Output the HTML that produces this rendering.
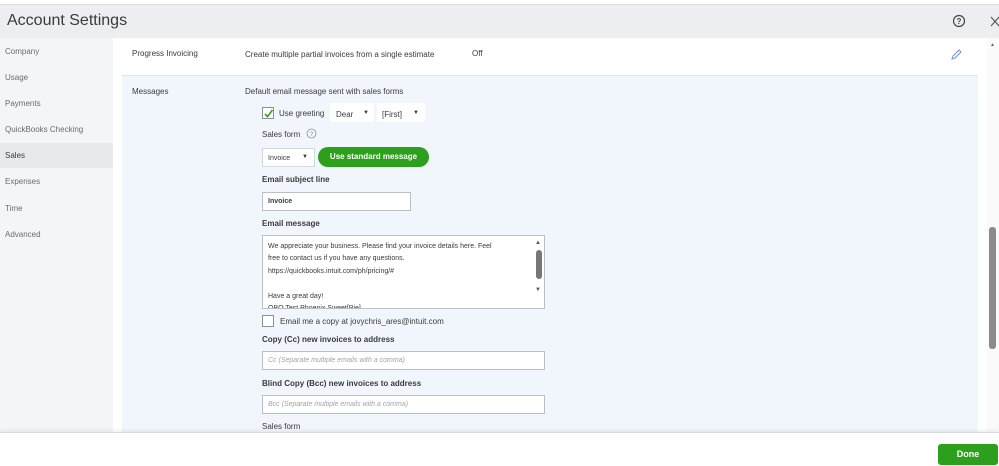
<!DOCTYPE html>
<html><head><style>
*{margin:0;padding:0;box-sizing:border-box}
body{width:999px;height:466px;overflow:hidden;background:#fff;font-family:"Liberation Sans",sans-serif;color:#393a3d;position:relative;font-size:8px}
.a{position:absolute}
.top{left:0;top:4px;width:999px;height:34px;background:#eceef1;border-top:1px solid #dcdde0}
.side{left:0;top:38px;width:113px;height:394px;background:#f4f5f8}
.si{position:absolute;left:5px;font-size:8px;color:#6b6c72}
.blue{left:122px;top:75px;width:856px;height:357px;background:#f1f6fd;border-top:1px solid #dde5ef}
.lbl{font-size:8px;color:#393a3d}
.b{font-weight:bold}
.inp{position:absolute;background:#fff;border:1px solid #babec5}
.ph{font-style:italic;color:#a0a3a9;font-size:7px}
</style></head><body>
<div class="a top"></div>
<div class="a" style="left:7px;top:12px;font-size:16px;color:#393a3d">Account Settings</div>
<svg class="a" style="left:952px;top:14px" width="14" height="14"><circle cx="7" cy="7" r="5.5" fill="none" stroke="#444" stroke-width="1.2"/><text x="7" y="10" font-size="8" text-anchor="middle" font-family="Liberation Sans" fill="#444" font-weight="bold">?</text></svg>
<svg class="a" style="left:990px;top:16px" width="9" height="11"><path d="M1 1L9 10M9 1L1 10" stroke="#555" stroke-width="1.1"/></svg>
<div class="a side"></div>
<div class="a" style="left:0;top:143px;width:113px;height:25px;background:#e8e9ec"></div>
<div class="si" style="top:47px">Company</div>
<div class="si" style="top:73px">Usage</div>
<div class="si" style="top:99px">Payments</div>
<div class="si" style="top:125px">QuickBooks Checking</div>
<div class="si" style="top:151px;color:#393a3d">Sales</div>
<div class="si" style="top:177px">Expenses</div>
<div class="si" style="top:204px">Time</div>
<div class="si" style="top:230px">Advanced</div>
<div class="a lbl" style="left:132px;top:49px">Progress Invoicing</div>
<div class="a lbl" style="left:245px;top:50px">Create multiple partial invoices from a single estimate</div>
<div class="a lbl" style="left:472px;top:49px">Off</div>
<svg class="a" style="left:950px;top:49px" width="12" height="12"><path d="M2 10L3 7L9 1L11 3L5 9Z" fill="none" stroke="#6b8fe0" stroke-width="1"/></svg>
<div class="a blue"></div>
<div class="a lbl" style="left:132px;top:87px">Messages</div>
<div class="a lbl" style="left:245px;top:87px">Default email message sent with sales forms</div>
<div class="a" style="left:262px;top:107px;width:12px;height:12px;border:1px solid #8d9096;background:#fff"></div>
<svg class="a" style="left:263px;top:108px" width="11" height="11"><path d="M2 6L4.5 8.5L9.5 2" fill="none" stroke="#2ca01c" stroke-width="1.6"/></svg>
<div class="a lbl" style="left:279px;top:109px">Use greeting</div>
<div class="a" style="left:330px;top:103px;width:44px;height:19px;background:#fff"></div>
<div class="a lbl" style="left:336px;top:110px">Dear</div><div class="a" style="left:363px;top:110px;font-size:6px">▼</div>
<div class="a" style="left:377px;top:103px;width:48px;height:19px;background:#fff"></div>
<div class="a lbl" style="left:382px;top:110px">[First]</div><div class="a" style="left:413px;top:110px;font-size:6px">▼</div>
<div class="a lbl" style="left:262px;top:130px">Sales form</div>
<svg class="a" style="left:306px;top:128px" width="11" height="11"><circle cx="5.5" cy="5.5" r="4.5" fill="none" stroke="#8d9096" stroke-width=".8"/><text x="5.5" y="8" font-size="6" text-anchor="middle" fill="#8d9096">?</text></svg>
<div class="a" style="left:262px;top:148px;width:53px;height:19px;background:#fff;border:1px solid #d4d7dc"></div>
<div class="a lbl" style="left:268px;top:155px;font-size:7px">Invoice</div><div class="a" style="left:302px;top:154px;font-size:6px">▼</div>
<div class="a b" style="left:318px;top:147px;width:111px;height:20px;border-radius:10px;background:#2ca01c;color:#fff;font-size:8px;text-align:center;line-height:20px">Use standard message</div>
<div class="a lbl b" style="left:262px;top:175px">Email subject line</div>
<div class="inp" style="left:262px;top:192px;width:149px;height:19px"></div>
<div class="a lbl b" style="left:268px;top:198px;font-size:7px">Invoice</div>
<div class="a lbl b" style="left:262px;top:219px">Email message</div>
<div class="inp" style="left:262px;top:235px;width:283px;height:74px;overflow:hidden">
<div style="position:absolute;left:5px;top:5px;width:268px;font-size:7px;line-height:12.4px;color:#393a3d">We appreciate your business. Please find your invoice details here. Feel<br>free to contact us if you have any questions.<br>https://quickbooks.intuit.com/ph/pricing/#<br><br>Have a great day!<br>QBO Test Phoenix Sweet[Pie]</div>
<div style="position:absolute;left:271px;top:0;width:11px;height:73px;background:#fff"></div>
<div style="position:absolute;left:272px;top:4px;font-size:6px;color:#555">▲</div>
<div style="position:absolute;left:273px;top:14px;width:6px;height:29px;border-radius:3px;background:#777"></div>
<div style="position:absolute;left:272px;top:51px;font-size:6px;color:#555">▼</div>
</div>
<div class="a" style="left:262px;top:315px;width:12px;height:12px;border:1px solid #8d9096;background:#fff"></div>
<div class="a lbl" style="left:280px;top:317px">Email me a copy at jovychris_ares@intuit.com</div>
<div class="a lbl b" style="left:262px;top:335px">Copy (Cc) new invoices to address</div>
<div class="inp" style="left:262px;top:351px;width:283px;height:19px"></div>
<div class="a ph" style="left:268px;top:357px">Cc (Separate multiple emails with a comma)</div>
<div class="a lbl b" style="left:262px;top:379px">Blind Copy (Bcc) new invoices to address</div>
<div class="inp" style="left:262px;top:395px;width:283px;height:19px"></div>
<div class="a ph" style="left:268px;top:401px">Bcc (Separate multiple emails with a comma)</div>
<div class="a lbl" style="left:262px;top:422px">Sales form</div>
<div class="a" style="left:987px;top:38px;width:12px;height:394px;background:#fafafa"></div>
<div class="a" style="left:990px;top:42px;font-size:5px;color:#666">▲</div>
<div class="a" style="left:989px;top:227px;width:7px;height:122px;border-radius:3px;background:#8b8b8b"></div>
<div class="a" style="left:0;top:432px;width:999px;height:34px;background:#fff;border-top:1px solid #d8d9dc;box-shadow:0 -2px 3px rgba(0,0,0,.06)"></div>
<div class="a b" style="left:938px;top:444px;width:60px;height:21px;border-radius:3px;background:#2ca01c;color:#fff;font-size:9px;text-align:center;line-height:21px">Done</div>
</body></html>
